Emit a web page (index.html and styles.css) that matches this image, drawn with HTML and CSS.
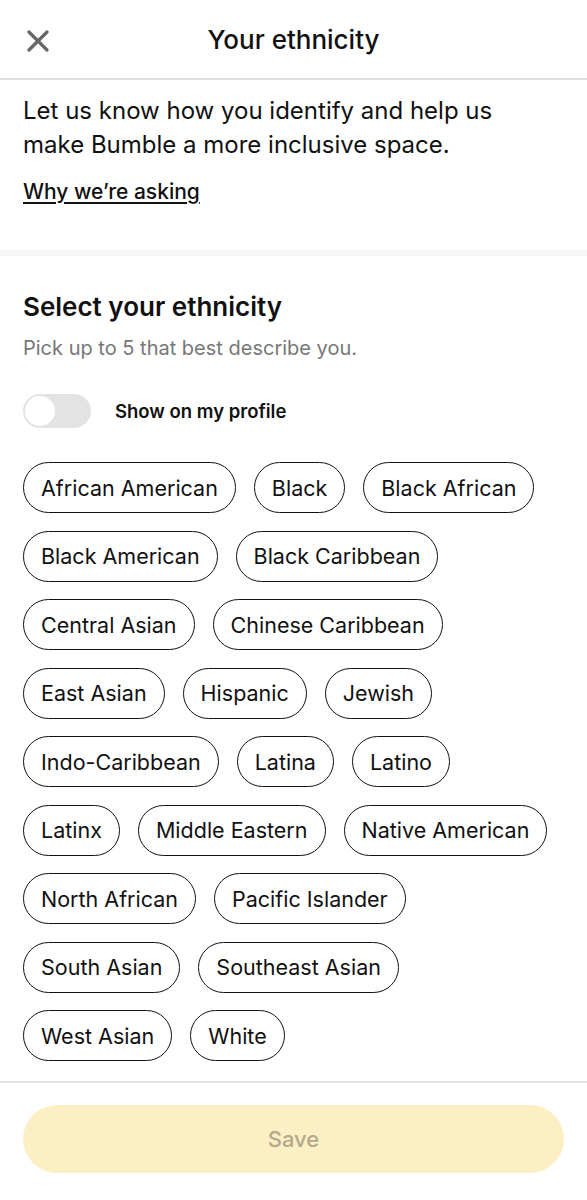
FILE: index.html
```html
<!DOCTYPE html>
<html>
<head>
<meta charset="utf-8">
<link rel="stylesheet" href="styles.css">
</head>
<body>
<div class="app">
  <header class="header">
    <button class="close" aria-label="Close">
      <svg width="22" height="22" viewBox="0 0 22 22"><path d="M2 2 L20 20 M20 2 L2 20" stroke="#666" stroke-width="3.2" stroke-linecap="round"/></svg>
    </button>
    <h1 class="title">Your ethnicity</h1>
  </header>
  <section class="intro">
    <p class="intro-text">Let us know how you identify and help us<br>make Bumble a more inclusive space.</p>
    <a class="why" href="#">Why we’re asking</a>
  </section>
  <div class="sep"></div>
  <section class="select">
    <h2 class="sel-title">Select your ethnicity</h2>
    <p class="sel-sub">Pick up to 5 that best describe you.</p>
    <div class="toggle-row">
      <span class="toggle"><span class="knob"></span></span>
      <span class="toggle-label">Show on my profile</span>
    </div>
    <div class="chips">
      <span class="chip">African American</span>
      <span class="chip">Black</span>
      <span class="chip">Black African</span>
      <span class="chip">Black American</span>
      <span class="chip">Black Caribbean</span>
      <span class="chip">Central Asian</span>
      <span class="chip">Chinese Caribbean</span>
      <span class="chip">East Asian</span>
      <span class="chip">Hispanic</span>
      <span class="chip">Jewish</span>
      <span class="chip">Indo-Caribbean</span>
      <span class="chip">Latina</span>
      <span class="chip">Latino</span>
      <span class="chip">Latinx</span>
      <span class="chip">Middle Eastern</span>
      <span class="chip">Native American</span>
      <span class="chip">North African</span>
      <span class="chip">Pacific Islander</span>
      <span class="chip">South Asian</span>
      <span class="chip">Southeast Asian</span>
      <span class="chip">West Asian</span>
      <span class="chip">White</span>
    </div>
  </section>
  <footer class="footer">
    <button class="save">Save</button>
  </footer>
</div>
</body>
</html>
```
FILE: styles.css
```css
* { box-sizing: border-box; }
html, body { margin: 0; padding: 0; background: #fff; }
body { font-family: "Inter", "Liberation Sans", sans-serif; color: #111; }
.app { width: 587px; }
.header {
  height: 80px;
  border-bottom: 2px solid #e0e0e0;
  display: flex;
  align-items: center;
  justify-content: center;
  position: relative;
}
.close {
  position: absolute;
  left: 27px;
  top: 30px;
  border: 0; background: none; padding: 0; margin: 0;
  width: 22px; height: 22px;
}
.title { margin: 0; font-size: 26px; font-weight: 500; color: #111; letter-spacing: 0; }
.intro { padding: 14px 23px 0; height: 170px; }
.intro-text { margin: 0; font-size: 24px; line-height: 34px; color: #111; }
.why {
  display: inline-block; margin-top: 16px; font-size: 21px; line-height: 28px;
  color: #111; font-weight: 500; text-decoration: underline; text-underline-offset: 3px; text-decoration-thickness: 1.5px;
}
.sep { height: 6px; background: #f6f6f6; }
.select { padding: 34px 23px 0; }
.sel-title { margin: 0; font-size: 26px; line-height: 34px; font-weight: 600; }
.sel-sub { margin: 10px 0 0; font-size: 20px; line-height: 28px; color: #777; }
.toggle-row { display: flex; align-items: center; gap: 24px; margin-top: 32px; }
.toggle { width: 68px; height: 34px; border-radius: 17px; background: #e3e3e3; position: relative; display: inline-block; }
.knob { position: absolute; left: 2px; top: 2px; width: 30px; height: 30px; border-radius: 50%; background: #fff; }
.toggle-label { font-size: 18.5px; font-weight: 600; color: #111; }
.chips { display: flex; flex-wrap: wrap; gap: 17.5px 18px; margin-top: 34px; padding-bottom: 20px; border-bottom: 2px solid #e2e2e2; margin-left: -23px; margin-right: -23px; padding-left: 23px; padding-right: 23px; }
.chip {
  display: inline-flex; align-items: center; height: 51px; padding: 0 17px;
  border: 1.8px solid #111; border-radius: 26px; font-size: 21.5px; color: #111; white-space: nowrap;
}
.footer { padding: 22px 23px 27px; }
.save {
  width: 100%; height: 68px; border-radius: 34px; border: 0; background: #fdefc4;
  font-family: inherit; font-size: 22px; font-weight: 500; color: #b3a98c;
}
```
